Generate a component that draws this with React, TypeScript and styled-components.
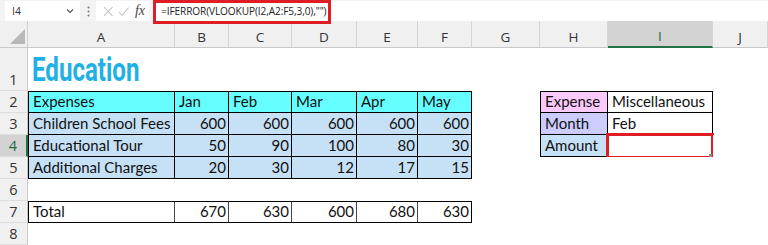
import React from 'react';
import styled, { createGlobalStyle } from 'styled-components';

const GlobalStyle = createGlobalStyle`
  html, body { margin: 0; padding: 0; background: #ffffff; }
  body {
    width: 768px;
    height: 245px;
    overflow: hidden;
    font-family: "Lato", "Liberation Sans", sans-serif;
  }
`;

const Window = styled.div`
  width: 768px;
  height: 245px;
  display: flex;
  flex-direction: column;
  overflow: hidden;
  background: #ffffff;
`;

/* ---------- formula bar ---------- */

const FormulaBar = styled.div`
  height: 21px;
  flex: none;
  display: flex;
  align-items: stretch;
  background: #f3f3f3;
  padding: 1px 0 0 5px;
  box-sizing: border-box;
  font-family: "Open Sans", "Liberation Sans", sans-serif;
`;

const NameBox = styled.div`
  width: 75px;
  display: flex;
  align-items: center;
  justify-content: space-between;
  background: #ffffff;
  padding: 0 5px 0 7px;
  box-sizing: border-box;
  font-size: 10.5px;
  color: #333;
`;

const Grip = styled.div`
  width: 16px;
  display: flex;
  align-items: center;
  justify-content: center;
`;

const FuncBox = styled.div`
  width: 53px;
  display: flex;
  align-items: center;
  gap: 5px;
  background: #ffffff;
  padding: 0 4px 0 7px;
  box-sizing: border-box;
`;

const Fx = styled.span`
  margin-left: auto;
  font-family: "Liberation Serif", serif;
  font-style: italic;
  font-size: 14px;
  color: #444;
`;

const FormulaInput = styled.div`
  flex: 1;
  margin-left: 4px;
  background: #ffffff;
  display: flex;
  align-items: center;
  position: relative;
  padding-left: 8px;
  font-size: 10.1px;
  color: #222;
  letter-spacing: -0.1px;
`;

const FormulaMark = styled.div`
  position: absolute;
  left: 0;
  top: -1px;
  width: 178px;
  height: 24px;
  border: 3px solid #e01c24;
  box-sizing: border-box;
  pointer-events: none;
`;

/* ---------- sheet grid ---------- */

const COL_WIDTHS = [147, 54, 63, 65, 61, 54, 68, 68, 105];
const LETTERS = ['A', 'B', 'C', 'D', 'E', 'F', 'G', 'H', 'I', 'J'];

const Sheet = styled.div`
  display: grid;
  grid-template-columns: 28px ${COL_WIDTHS.map((w) => `${w}px`).join(' ')} 1fr;
  grid-template-rows: 27px 43px repeat(7, 22px);
  flex: none;
`;

const Corner = styled.div`
  background: #f0f0f0;
  border-right: 1px solid #d0d0d0;
  border-bottom: 1px solid #c8c8c8;
  box-sizing: border-box;
  display: flex;
  align-items: flex-end;
  justify-content: flex-end;
  padding: 0 2px 3px 0;
`;

const ColHead = styled.div<{ $selected?: boolean }>`
  background: ${(p) => (p.$selected ? '#d3d3d3' : '#f0f0f0')};
  color: ${(p) => (p.$selected ? '#1d6b3e' : '#333')};
  border-right: 1px solid #d4d4d4;
  border-bottom: ${(p) => (p.$selected ? '2px solid #217346' : '1px solid #c8c8c8')};
  box-sizing: border-box;
  display: flex;
  align-items: center;
  justify-content: center;
  padding-top: 5px;
  font-family: "Open Sans", "Liberation Sans", sans-serif;
  font-size: 13.5px;
`;

const RowHead = styled.div<{ $selected?: boolean }>`
  background: ${(p) => (p.$selected ? '#d3d3d3' : '#f0f0f0')};
  color: ${(p) => (p.$selected ? '#1d6b3e' : '#333')};
  border-right: ${(p) => (p.$selected ? '2px solid #217346' : '1px solid #c8c8c8')};
  border-bottom: 1px solid #dcdcdc;
  box-sizing: border-box;
  display: flex;
  align-items: flex-end;
  justify-content: center;
  padding-bottom: 1px;
  font-family: "Open Sans", "Liberation Sans", sans-serif;
  font-size: 14.5px;
`;

type Edge = string | undefined;

const Cell = styled.div<{
  $bg?: string;
  $align?: 'left' | 'right';
  $top?: Edge;
  $left?: Edge;
  $right?: Edge;
  $bottom?: Edge;
}>`
  position: relative;
  background: ${(p) => p.$bg ?? '#ffffff'};
  border-top: ${(p) => (p.$top ? `1px solid ${p.$top}` : 'none')};
  border-left: ${(p) => (p.$left ? `1px solid ${p.$left}` : 'none')};
  border-right: ${(p) => (p.$right ? `1px solid ${p.$right}` : 'none')};
  border-bottom: ${(p) => (p.$bottom ? `1px solid ${p.$bottom}` : 'none')};
  box-sizing: border-box;
  display: flex;
  align-items: flex-end;
  justify-content: ${(p) => (p.$align === 'right' ? 'flex-end' : 'flex-start')};
  padding: 0 2px 2px 4px;
  font-size: 15px;
  color: #111;
  white-space: nowrap;
`;

const Title = styled.span`
  display: inline-block;
  font-family: "Roboto", "Liberation Sans", sans-serif;
  font-weight: 700;
  font-size: 33px;
  line-height: 1;
  color: #1fb1e6;
  transform: scaleX(0.73);
  transform-origin: left bottom;
  margin-bottom: 3px;
`;

const ActiveMark = styled.div`
  position: absolute;
  left: -2px;
  top: -2px;
  right: -2px;
  bottom: -3px;
  border: 3px solid #e01c24;
  pointer-events: none;
`;

const FillHandle = styled.div`
  position: absolute;
  right: -1px;
  bottom: -1px;
  width: 3px;
  height: 3px;
  background: #8a8a8a;
`;

/* ---------- data ---------- */

type Spec = {
  text?: string;
  bg?: string;
  align?: 'left' | 'right';
  top?: Edge;
  left?: Edge;
  right?: Edge;
  bottom?: Edge;
  active?: boolean;
};

const CYAN = '#66ffff';
const BLUE = '#c6e0f6';
const PINK = '#fbc9fb';
const LAVENDER = '#ccccff';
const LINE = '#000';

const specs: Record<string, Spec> = {};

const put = (row: number, col: number, s: Spec) => {
  specs[`${row}-${col}`] = s;
};

// Expense table, rows 2 to 5, columns A to F
const expenses: [string, number[]][] = [
  ['Children School Fees', [600, 600, 600, 600, 600]],
  ['Educational Tour', [50, 90, 100, 80, 30]],
  ['Additional Charges', [20, 30, 12, 17, 15]],
];
['Expenses', 'Jan', 'Feb', 'Mar', 'Apr', 'May'].forEach((t, c) =>
  put(2, c, { text: t, bg: CYAN, top: LINE, left: c === 0 ? LINE : undefined, right: LINE, bottom: LINE })
);
expenses.forEach(([label, vals], i) => {
  const row = 3 + i;
  put(row, 0, { text: label, bg: BLUE, left: LINE, right: LINE, bottom: LINE });
  vals.forEach((v, j) =>
    put(row, j + 1, { text: String(v), bg: BLUE, align: 'right', right: LINE, bottom: LINE })
  );
});

// Totals row
['Total', '670', '630', '600', '680', '630'].forEach((t, c) =>
  put(7, c, {
    text: t,
    align: c === 0 ? 'left' : 'right',
    top: LINE,
    left: c === 0 ? LINE : undefined,
    right: c === 5 ? LINE : '#444',
    bottom: LINE,
  })
);

// Lookup table, H2:I4
const lookup: [string, string, string][] = [
  ['Expense', PINK, 'Miscellaneous'],
  ['Month', LAVENDER, 'Feb'],
  ['Amount', BLUE, ''],
];
lookup.forEach(([label, bg, value], i) => {
  const row = 2 + i;
  put(row, 7, { text: label, bg, top: i === 0 ? LINE : undefined, left: LINE, right: LINE, bottom: LINE });
  put(row, 8, { text: value, top: i === 0 ? LINE : undefined, right: LINE, bottom: LINE, active: i === 2 });
});

const ROWS = [1, 2, 3, 4, 5, 6, 7, 8];
const ACTIVE_ROW = 4;
const ACTIVE_COL = 8;

const SelectAll = () => (
  <svg width="15" height="15" viewBox="0 0 15 15">
    <polygon points="15,0 15,15 0,15" fill="#b8b8b8" />
  </svg>
);

const Chevron = () => (
  <svg width="10" height="10" viewBox="0 0 10 10">
    <polyline points="2,3.5 5,6.5 8,3.5" fill="none" stroke="#555" strokeWidth="1.1" />
  </svg>
);

const Dots = () => (
  <svg width="3" height="11" viewBox="0 0 3 11">
    <circle cx="1.5" cy="1.5" r="1" fill="#777" />
    <circle cx="1.5" cy="5.5" r="1" fill="#777" />
    <circle cx="1.5" cy="9.5" r="1" fill="#777" />
  </svg>
);

const Cross = () => (
  <svg width="11" height="11" viewBox="0 0 11 11">
    <path d="M1 1 L10 10 M10 1 L1 10" stroke="#c4c4c4" strokeWidth="1.1" />
  </svg>
);

const Tick = () => (
  <svg width="12" height="11" viewBox="0 0 12 11">
    <path d="M1 6 L4.5 9.5 L11 1.5" fill="none" stroke="#c4c4c4" strokeWidth="1.1" />
  </svg>
);

export default function App() {
  return (
    <Window>
      <GlobalStyle />
      <FormulaBar>
        <NameBox>
          <span>I4</span>
          <Chevron />
        </NameBox>
        <Grip>
          <Dots />
        </Grip>
        <FuncBox>
          <Cross />
          <Tick />
          <Fx>fx</Fx>
        </FuncBox>
        <FormulaInput>
          <FormulaMark />
          =IFERROR(VLOOKUP(I2,A2:F5,3,0),"")
        </FormulaInput>
      </FormulaBar>

      <Sheet>
        <Corner>
          <SelectAll />
        </Corner>
        {LETTERS.map((l, c) => (
          <ColHead key={l} $selected={c === ACTIVE_COL}>
            {l}
          </ColHead>
        ))}

        {ROWS.map((row) => (
          <React.Fragment key={row}>
            <RowHead $selected={row === ACTIVE_ROW}>{row}</RowHead>
            {LETTERS.map((_, c) => {
              const s = specs[`${row}-${c}`];
              if (row === 1 && c === 0) {
                return (
                  <Cell key={c}>
                    <Title>Education</Title>
                  </Cell>
                );
              }
              return (
                <Cell
                  key={c}
                  $bg={s?.bg}
                  $align={s?.align}
                  $top={s?.top}
                  $left={s?.left}
                  $right={s?.right}
                  $bottom={s?.bottom}
                >
                  {s?.text}
                  {s?.active && (
                    <ActiveMark>
                      <FillHandle />
                    </ActiveMark>
                  )}
                </Cell>
              );
            })}
          </React.Fragment>
        ))}
      </Sheet>
    </Window>
  );
}
